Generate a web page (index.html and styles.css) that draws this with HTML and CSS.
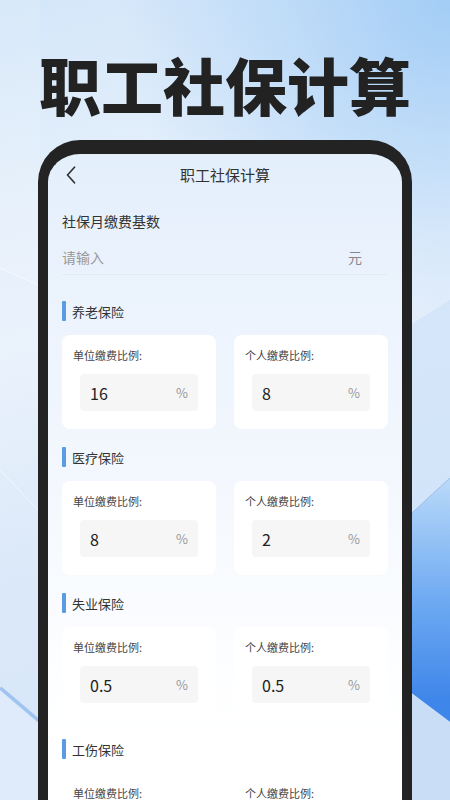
FILE: index.html
```html
<!DOCTYPE html>
<html lang="zh-CN">
<head>
<meta charset="utf-8">
<meta name="viewport" content="width=450">
<title>职工社保计算</title>
<link rel="stylesheet" href="styles.css">
</head>
<body>
<svg class="bg" viewBox="0 0 450 800" preserveAspectRatio="none" aria-hidden="true">
  <defs>
    <radialGradient id="tr" cx="450" cy="0" r="330" gradientUnits="userSpaceOnUse">
      <stop offset="0" stop-color="#a3cdf6"/>
      <stop offset="1" stop-color="#a3cdf6" stop-opacity="0"/>
    </radialGradient>
    <linearGradient id="rb" x1="0" y1="480" x2="0" y2="700" gradientUnits="userSpaceOnUse">
      <stop offset="0" stop-color="#b9d9f9"/>
      <stop offset="0.55" stop-color="#6eaaf2"/>
      <stop offset="1" stop-color="#3f86ea"/>
    </linearGradient>
  </defs>
  <rect width="450" height="800" fill="url(#tr)"/>
  <polygon points="402,330 450,300 450,478 402,522" fill="#cfe3fa" opacity="0.7"/>
  <polygon points="402,522 450,478 450,722 402,686" fill="url(#rb)"/>
  <line x1="402" y1="522" x2="450" y2="478" stroke="#8fb6e6" stroke-width="0.8"/>
  <polygon points="402,686 450,722 450,800 402,800" fill="#c9ddf7"/>
  <polygon points="0,0 40,0 40,286 0,268" fill="#ffffff" opacity="0.12"/>
  <line x1="0" y1="268" x2="40" y2="286" stroke="#ffffff" stroke-width="1" opacity="0.6"/>
  <line x1="0" y1="470" x2="40" y2="512" stroke="#ffffff" stroke-width="1" opacity="0.55"/>
  <line x1="0" y1="688" x2="40" y2="722" stroke="#9fc4ef" stroke-width="4"/>
  <polygon points="0,690 40,724 40,800 0,800" fill="#e2edfb" opacity="0.7"/>
</svg>

<main class="page">
  <h1 class="hero">职工社保计算</h1>

  <div class="phone">
    <header class="nav">
      <span class="back">
        <svg width="10" height="18" viewBox="0 0 10 18"><path d="M8.5 1.2 L1.5 9 L8.5 16.8" fill="none" stroke="#333" stroke-width="1.7" stroke-linecap="round" stroke-linejoin="round"/></svg>
      </span>
      <span class="nav-title">职工社保计算</span>
      <span></span>
    </header>

    <div class="base">
      <div class="base-label">社保月缴费基数</div>
      <div class="base-input"><span class="ph">请输入</span><span class="unit">元</span></div>
    </div>

    <section class="sec">
      <div class="sec-title"><span class="bar"></span><span>养老保险</span></div>
      <div class="cards">
        <div class="card"><div class="label">单位缴费比例:</div><div class="field"><span class="val">16</span><span class="pct">%</span></div></div>
        <div class="card"><div class="label">个人缴费比例:</div><div class="field"><span class="val">8</span><span class="pct">%</span></div></div>
      </div>
    </section>

    <section class="sec">
      <div class="sec-title"><span class="bar"></span><span>医疗保险</span></div>
      <div class="cards">
        <div class="card"><div class="label">单位缴费比例:</div><div class="field"><span class="val">8</span><span class="pct">%</span></div></div>
        <div class="card"><div class="label">个人缴费比例:</div><div class="field"><span class="val">2</span><span class="pct">%</span></div></div>
      </div>
    </section>

    <section class="sec">
      <div class="sec-title"><span class="bar"></span><span>失业保险</span></div>
      <div class="cards">
        <div class="card"><div class="label">单位缴费比例:</div><div class="field"><span class="val">0.5</span><span class="pct">%</span></div></div>
        <div class="card"><div class="label">个人缴费比例:</div><div class="field"><span class="val">0.5</span><span class="pct">%</span></div></div>
      </div>
    </section>

    <section class="sec">
      <div class="sec-title"><span class="bar"></span><span>工伤保险</span></div>
      <div class="cards">
        <div class="card"><div class="label">单位缴费比例:</div></div>
        <div class="card"><div class="label">个人缴费比例:</div></div>
      </div>
    </section>
  </div>
</main>
</body>
</html>
```

FILE: styles.css
```css
html, body {
  margin: 0;
  padding: 0;
}
body {
  width: 450px;
  height: 800px;
  overflow: hidden;
  position: relative;
  font-family: "Noto Sans CJK SC", "Noto Sans", sans-serif;
  background: linear-gradient(165deg, #d3e6f9 0%, #e4effb 22%, #eaf2fc 38%, #dce9f9 62%, #d2e3f8 100%);
  color: #333;
}
.bg {
  position: absolute;
  left: 0;
  top: 0;
  width: 450px;
  height: 800px;
  z-index: 0;
}
.page {
  position: relative;
  z-index: 1;
}
.hero {
  margin: 0;
  padding-top: 53px;
  font-size: 62px;
  line-height: 62px;
  font-weight: 900;
  text-align: center;
  color: #222;
}
.phone {
  box-sizing: border-box;
  width: 374px;
  height: 660px;
  margin: 25px 0 0 38px;
  border-style: solid;
  border-color: #232323;
  border-width: 14px 10px 0;
  border-radius: 42px 42px 0 0;
  background: linear-gradient(180deg, #e4effc 0px, #edf4fd 180px, #f6f9fe 380px, #fdfeff 520px, #ffffff 600px);
  background-clip: padding-box;
  overflow: hidden;
}
.nav {
  height: 42px;
  display: grid;
  grid-template-columns: 1fr auto 1fr;
  align-items: center;
}
.back {
  padding-left: 18px;
  display: flex;
  align-items: center;
}
.nav-title {
  font-size: 15px;
  color: #333;
  line-height: 20px;
}
.base {
  padding: 15px 14px 0;
}
.base-label {
  font-size: 14px;
  line-height: 20px;
  color: #333;
}
.base-input {
  margin-top: 16px;
  display: flex;
  justify-content: space-between;
  align-items: center;
  font-size: 14px;
  line-height: 20px;
  padding: 0 26px 7px 0;
  border-bottom: 1px solid #e2eaf4;
}
.ph {
  color: #999;
}
.unit {
  color: #888;
}
.sec {
  padding: 0 14px;
  margin-bottom: 18px;
}
.base + .sec {
  margin-top: 26px;
}
.sec-title {
  display: flex;
  align-items: center;
  gap: 6px;
  height: 20px;
  font-size: 13px;
  color: #333;
}
.bar {
  width: 4px;
  height: 20px;
  background: #5b9be2;
  border-radius: 1px;
}
.cards {
  margin-top: 14px;
  display: grid;
  grid-template-columns: 1fr 1fr;
  gap: 18px;
}
.card {
  background: #ffffff;
  border-radius: 8px;
  padding: 13px 0 18px;
}
.label {
  padding-left: 11px;
  font-size: 11px;
  line-height: 14px;
  color: #444;
}
.field {
  margin: 12px 18px 0;
  height: 37px;
  box-sizing: border-box;
  padding: 0 10px;
  background: #f6f6f6;
  border-radius: 4px;
  display: flex;
  justify-content: space-between;
  align-items: center;
}
.val {
  font-size: 16px;
  color: #222;
}
.pct {
  font-size: 13px;
  color: #999;
}
```
